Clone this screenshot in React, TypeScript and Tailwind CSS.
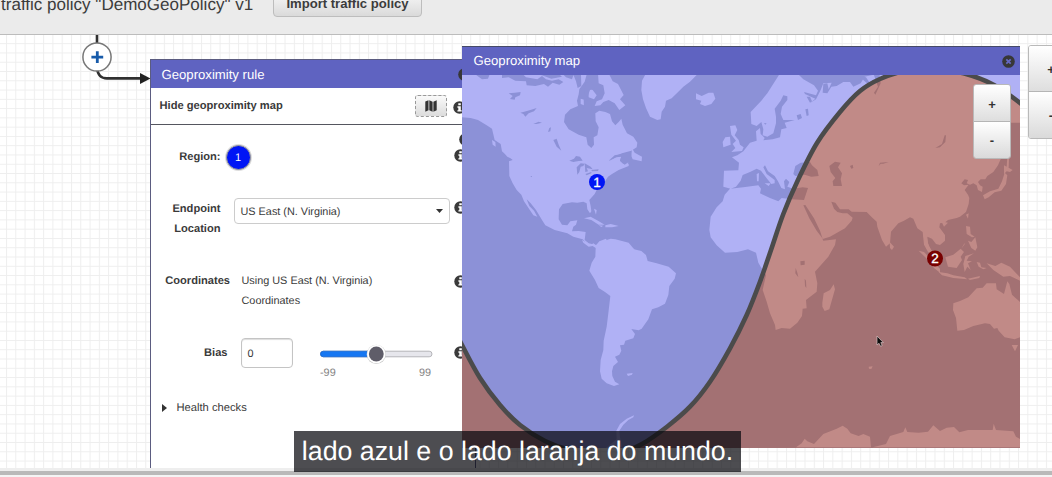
import React from "react";

type Point = [number, number];

const boundary: Point[] = [
  [452, 324], [462, 345], [480, 378], [500, 405], [520, 425], [545, 441], [570, 450], [600, 454], [622, 452],
  [642, 444], [667, 426.7], [690, 406.7], [710, 381.7], [730, 348.3], [746.7, 315], [760, 281.7], [771, 250],
  [783.3, 214], [797.5, 181], [817, 143], [840, 112], [860, 91], [880, 79], [905, 71], [934, 69], [966, 74],
  [994, 85], [1020, 103], [1036, 118],
];

function smooth(points: Point[]) {
  let d = `M${points[0][0]} ${points[0][1]}`;
  for (let i = 0; i < points.length - 1; i++) {
    const p0 = points[i - 1] ?? points[i];
    const p1 = points[i];
    const p2 = points[i + 1];
    const p3 = points[i + 2] ?? p2;
    d += ` C${p1[0] + (p2[0] - p0[0]) / 6} ${p1[1] + (p2[1] - p0[1]) / 6} ${p2[0] - (p3[0] - p1[0]) / 6} ${p2[1] - (p3[1] - p1[1]) / 6} ${p2[0]} ${p2[1]}`;
  }
  return d;
}

const boundaryPath = smooth(boundary);

function World({ land, water }: { land: string; water: string }) {
  return (
    <g>
      <rect x="462" y="75" width="558" height="373" fill={water} />
      {/* North and Central America, Greenland */}
      <g transform="translate(462 40) scale(.33333)">
        <g fill={land}>
          <path d="M0 100H375L368 125 352 148 350 163 345 182 348 198 325 208 309 224 306 246 320 268 350 284 373 292 377 314 388 324 396 314 395 292 406 286 410 262 401 244 400 220 412 212 430 216 444 222 450 244 460 256 470 246 478 236 482 254 495 280 514 290 526 308 524 322 508 332 480 340 462 347 440 364 462 352 478 348 474 362 484 372 500 371 500 378 470 390 450 402 438 410 424 432 404 450 398 462 382 480 386 498 388 514 384 520 376 508 374 490 364 485 346 488 330 487 302 492 291 508 290 538 300 554 316 556 325 544 346 541 342 554 334 560 330 574 350 573 371 576 368 600 380 610 402 615 416 612 428 612 434 622 420 628 404 618 380 616 362 598 334 590 316 580 278 570 250 556 240 540 222 510 206 490 194 478 202 498 216 512 226 530 214 526 202 508 186 484 178 464 164 450 152 430 142 408 141 364 152 360 134 344 120 334 116 312 98 300 90 266 74 256 48 240 26 234 0 232Z" />
          <path d="M120 332L142 340 152 358 136 350ZM90 300L100 306 101 320 92 314ZM510 324L518 338 540 350 539 364 512 358 508 348ZM484 370L500 362 496 376ZM552 100H709L684 125 664 140 649 155 629 175 612 182 609 200 599 215 596 238 586 240 564 230 552 204 543 178 538 150 540 122Z" />
          <path d="M408 100L440 100 452 124 468 132 485 165 474 178 490 196 472 210 458 190 440 180 424 186 415 196 398 198 404 184 420 178 428 160 424 136 410 130ZM380 146L392 150 404 166 396 178 380 172ZM356 176L370 180 386 196 372 198 356 192ZM366 535L386 530 408 542 428 554 410 554 388 540ZM430 556L446 552 470 558 450 562 430 562ZM396 506L404 510 402 524ZM410 556L424 557 418 561Z" />
          <path d="M434 600L446 596 460 598 500 608 520 632H430Z" />
        </g>
        <g fill={water}>
          <path d="M36 100H84L78 116 60 118ZM120 100H180L192 112 226 118 240 108 252 118 270 122 290 118 304 126 292 134 272 128 258 140 246 132 220 138 194 136 192 124 160 122 140 112 120 114ZM218 100H288L300 110 268 116 240 106ZM300 100H336L330 118 312 112ZM334 104H357L358 138 347 144 342 124ZM140 160L158 158 176 156 174 166 160 172 158 179 144 177 152 168ZM175 218L192 214 205 210 224 204 216 214 200 220 190 230 184 222ZM214 252L230 245 240 248 224 252ZM258 276L262 264 267 262 265 274ZM274 300L284 296 290 314 298 332 284 320ZM322 362L336 356 342 348 354 350 362 362 350 363 334 366ZM344 382L356 370 368 371 364 378 356 380 352 396 346 404ZM368 370L386 380 392 388 374 384 378 394 370 396ZM370 402L388 396 388 400 374 406ZM388 390L410 388 408 393 390 394ZM205 408L210 408 209 412ZM440 362L458 346 484 341 500 336 508 344 506 362 488 374 474 362 478 350 462 352ZM365 176L388 186 390 210 366 210ZM372 128L388 124 398 145 384 150 376 172 366 162Z" />
        </g>
      </g>
      {/* South America, Antarctic peninsula */}
      <g transform="translate(560 230) scale(.33333)" fill={land}>
        <path d="M66 30L78 36 92 46 100 40 108 46 118 34 138 26 142 34 152 28 158 34 190 36 206 44 222 58 244 63 258 75 263 93 290 100 326 110 348 130 344 146 328 168 325 195 315 221 295 232 276 238 265 268 245 296 236 301 214 297 225 312 220 325 196 332 192 344 180 346 184 362 178 374 165 380 174 396 160 408 156 424 157 438 165 455 178 463 162 468 140 460 125 446 120 424 122 390 130 360 131 332 140 290 145 250 151 198 135 186 116 174 105 150 88 122 95 98 106 80 107 54 98 48 86 50 70 38ZM200 431L218 429 216 434 204 438ZM222 556L220 562 205 570 190 584 178 602 180 622 186 650 130 660 170 628 169 602 180 582 200 566Z" />
      </g>
      {/* Eurasia and Africa */}
      <g transform="translate(650 40) scale(.33333)">
        <path
          fill={land}
          d="M390 100H1110V248H1083L1082 300 1070 340 1052 358 1044 376 1030 396 1012 408 1006 418 992 418 984 426 990 436 998 440 996 456 984 450 980 436 970 430 960 434 950 430 954 420 944 418 934 430 942 436 956 434 944 450 954 464 958 474 956 492 948 516 930 530 920 534 894 540 884 548 870 550 868 562 885 585 885 602 870 615 858 612 846 596 832 590 834 610 850 645 834 636 822 614 818 576 802 565 790 536 780 532 762 542 745 550 723 575 720 610 708 620 696 600 682 560 680 545 664 530 650 516 605 515 596 508 570 508 556 488 544 485 552 506 562 516 578 520 592 520 608 533 605 542 585 565 540 590 518 597 510 572 492 535 466 495 460 496 478 535 500 572 515 592 520 602 558 598 555 615 535 650 495 695 502 730 500 755 468 780 470 805 458 806 456 828 442 848 420 866 395 864 377 870 375 855 360 820 350 785 338 750 348 705 332 680 325 668 318 638 294 628 262 636 225 638 200 616 182 592 178 570 182 530 200 502 218 484 224 464 240 446 280 442 325 436 333 446 330 460 360 474 385 484 395 474 425 478 462 480 474 444 458 442 430 446 412 440 418 426 408 416 402 424 405 448 394 444 384 424 374 408 354 394 345 376 340 382 350 402 374 420 374 430 364 432 350 415 333 392 320 386 300 396 278 405 272 422 258 440 242 446 220 440 222 392 265 391 267 368 246 352 262 346 280 334 300 308 320 302 318 274 330 264 332 282 344 294 340 301 368 298 390 292 394 268 410 264 404 248 434 240 400 240 392 222 396 200 412 180 412 169 400 166 392 182 374 206 378 230 378 250 370 280 352 290 338 286 340 268 334 246 320 258 304 252 302 216 334 182 352 160Z"
        />
        <path
          fill={land}
          d="M240 258L256 256 262 270 254 286 266 300 270 314 281 322 276 333 244 336 256 324 248 312 258 302 244 284ZM226 292L240 290 242 314 220 322 218 306ZM138 160L155 168 176 158 190 158 196 176 184 192 165 198 150 192 154 182 138 178ZM344 430L362 430 356 438ZM320 402L327 399 326 424 321 424Z"
        />
        <g fill={water}>
          <path d="M442 100H690L644 110 632 130 610 140 600 126 580 126 560 138 544 140 532 160 518 158 520 132 532 130 536 148 545 128 520 130 512 150 498 178 482 188 496 176 465 162 462 156 498 166 504 152 492 136 460 118ZM632 108L648 112 660 130 656 134 640 120ZM670 100H688L692 130 676 164 672 158 684 140ZM470 170L480 170 486 184 480 188ZM440 226L452 222 456 234 444 240ZM466 208L474 206 476 226 470 228Z" />
          <path d="M430 402L436 378 452 368 480 366 486 376 502 390 506 408 484 410 464 404 436 408ZM538 378L555 365 572 368 564 382 576 400 572 418 576 438 550 438 548 424 556 414 542 396ZM600 378L608 374 610 384 604 386ZM686 378L690 368 716 366 700 371 692 371ZM856 324L876 312 884 286 888 286 886 306 870 322ZM451 664L464 662 464 674 452 676ZM437 684L442 698 445 712 436 700ZM464 716L468 722 469 744 465 738ZM342 249L350 250 346 254Z" />
        </g>
      </g>
      {/* Japan and the islands of south-east Asia */}
      <g transform="translate(780 120) scale(.33333)" fill={land}>
        <path d="M609 226L630 214 655 206 666 184 674 158 682 166 678 192 664 212 644 217 626 232 614 238ZM682 110L687 118 686 144 680 140ZM672 136L698 150 690 156 680 154 672 162ZM558 284L566 280 564 296ZM329 366L342 380 336 390 330 384ZM416 392L432 396 460 425 480 446 480 458 462 444 438 414ZM430 345L440 352 446 378 458 396 450 396 436 374ZM476 456L502 460 520 466 554 472 562 478 520 474 486 466ZM564 476L600 468 598 474 570 480ZM496 412L520 404 542 386 552 396 542 410 546 420 530 444 504 440ZM556 408L582 400 566 410 560 422 576 424 564 430 572 450 562 440 554 456 550 432ZM558 318L570 320 572 342 584 350 576 352 560 342ZM564 362L574 366 586 352 592 382 586 392 574 384ZM556 370L544 386 552 372ZM590 426L600 428 604 442 620 444 610 448 596 440ZM620 430L646 438 664 428 690 440 720 472 720 482 690 468 670 470 640 450ZM484 304L504 308 492 320Z" />
      </g>
      {/* Australia, Madagascar, Antarctica */}
      <g transform="translate(740 240) scale(.33333)" fill={land}>
        <path d="M640 190L660 183 685 172 710 145 728 143 740 130 768 130 770 148 792 162 802 124 808 132 816 164 840 186V292L824 298 794 292 776 272 772 264 762 266 750 252 735 250 700 258 672 270 652 272 648 234 639 210ZM815 315L834 315 825 334ZM247 188L251 160 270 150 281 133 285 148 268 208 254 213 247 200ZM386 380L398 379 394 387 387 386ZM168 622L185 610 194 596 202 604 222 612 250 582 290 566 308 557 322 566 332 580 356 588 370 582 390 590 393 622ZM398 622L438 612 450 588 490 576 496 562 502 576 536 578 564 575 580 556 600 573 620 563 642 561 658 577 684 570 758 570 761 551 768 570 820 574 828 590 842 598V622Z" />
      </g>
    </g>
  );
}

function MapDrawing() {
  const red = `${boundaryPath} L1036 460 L452 460 Z`;
  return (
    <svg className="block h-[373px] w-[558px]" viewBox="462 75 558 373">
      <defs>
        <clipPath id="eastZone">
          <path d={red} />
        </clipPath>
      </defs>
      <World land="#b0b1f5" water="#8c91d7" />
      <g clipPath="url(#eastZone)">
        <World land="#c18a87" water="#a37173" />
      </g>
      <path d={boundaryPath} fill="none" stroke="#4b4b4b" strokeWidth="4.6" />
      <g fontFamily="Liberation Sans, sans-serif" fontSize="13.5" fill="#fff" stroke="#fff" strokeWidth=".3" textAnchor="middle">
        <circle cx="597" cy="182" r="8" fill="#0015f5" stroke="none" />
        <text x="597" y="187">1</text>
        <circle cx="935" cy="258.5" r="8" fill="#780000" stroke="none" />
        <text x="935" y="263.3">2</text>
      </g>
      <path d="M877 336V345L879 343.3 880.6 346.3 882.2 345.5 880.8 342.6H883.4Z" fill="#0b0b0b" stroke="#d9c4c4" strokeWidth=".7" />
    </svg>
  );
}

function InfoIcon() {
  return (
    <svg className="block size-[13px] shrink-0" viewBox="0 0 13 13">
      <circle cx="6.5" cy="6.5" r="6.2" fill="#3a3a3a" />
      <path d="M5.3 2.3h2.5v2H5.3zM4.4 5.3h3.4v3.9h.9v1.4H4.4V9.2h.9V6.7h-.9z" fill="#fff" />
    </svg>
  );
}

function CloseIcon() {
  return (
    <svg className="block size-[13px] shrink-0" viewBox="0 0 13 13">
      <circle cx="6.5" cy="6.5" r="6.3" fill="#373737" />
      <path d="M4.3 4.3l4.4 4.4M8.7 4.3L4.3 8.7" stroke="#6669c4" strokeWidth="1.7" />
    </svg>
  );
}

function ZoomControl({ className, button }: { className: string; button: string }) {
  return (
    <div className={`flex flex-col overflow-hidden rounded-[3px] border border-[#b9b9b9] text-[13px] font-bold text-[#333] ${className}`}>
      <button className={`border-b border-[#b5b5b5] bg-linear-to-b from-white to-[#dedede] pt-[3px] ${button}`}>+</button>
      <button className={`bg-linear-to-b from-white to-[#dadada] pt-px ${button}`}>-</button>
    </div>
  );
}

function RulePanel() {
  return (
    <section className="absolute top-[59px] left-[150px] flex h-[409px] w-[326px] flex-col border-x border-t border-[#5b5c80] bg-white text-[10.87px] leading-5 text-[#3a3a3a]">
      <header className="flex h-7 shrink-0 items-center justify-between bg-[#5f63c1] pr-[4px] pl-[10.5px] text-[13.15px] text-white">
        <span className="pt-px">Geoproximity rule</span>
        <CloseIcon />
      </header>
      <div className="flex h-[37px] shrink-0 items-center border-b border-[#55565f] pl-[8.5px] text-[11.15px] font-bold">
        <span className="w-[255.5px]">Hide geoproximity map</span>
        <button className="flex h-[22px] w-8 items-center justify-center rounded-[3px] border border-dashed border-[#999] bg-linear-to-b from-[#fafafa] to-[#dcdcdc]">
          <svg className="h-3 w-3" viewBox="0 0 12 12" fill="#333">
            <path d="M.3 1.5L3.5.3v10L.3 11.7zM4.3.3l3.3 1.4v10L4.3 10.3zM8.4 1.7L11.7.3v10L8.4 11.7z" />
          </svg>
        </button>
        <span className="pt-0.5 pl-1.5"><InfoIcon /></span>
      </div>
      <div className="flex h-[66px] shrink-0 items-start">
        <span className="w-[69.5px] pt-[22px] text-right text-[11.1px] font-bold">Region:</span>
        <span className="mt-[20px] ml-[5px] flex size-[25px] items-center justify-center rounded-full border border-[#999] bg-[#0015f5] text-[11px] text-white ring-1 ring-[#ddd]">1</span>
        <div className="ml-auto flex flex-col gap-[3px] pt-[8px]">
          <span className="pl-[5px]"><CloseIcon /></span>
          <span className="pr-[8.5px]"><InfoIcon /></span>
        </div>
      </div>
      <div className="flex h-[71px] shrink-0 items-start pt-[7px]">
        <span className="w-[69.5px] pt-px text-right text-[11.1px] font-bold">Endpoint<br />Location</span>
        <div className="ml-[13.5px] flex h-[26px] w-[216px] items-center justify-between rounded-[4px] border border-[#ccc] pr-[6px] pl-[5.5px]">
          <span className="pt-px">US East (N. Virginia)</span>
          <svg className="h-1 w-[7px]" viewBox="0 0 7 4"><path d="M0 0H7L3.5 4Z" fill="#333" /></svg>
        </div>
        <span className="pt-[3px] pl-[4px]"><InfoIcon /></span>
      </div>
      <div className="flex h-[72px] shrink-0 items-start pt-[9px]">
        <span className="w-[79px] text-right text-[11.1px] font-bold">Coordinates</span>
        <span className="ml-[11.5px] w-[212.5px] whitespace-nowrap">Using US East (N. Virginia)<br />Coordinates</span>
        <span className="pt-[4px]"><InfoIcon /></span>
      </div>
      <div className="flex h-[63px] shrink-0 items-start">
        <span className="w-[76.5px] pt-[9px] text-right text-[11.1px] font-bold">Bias</span>
        <div className="ml-[13.5px] mt-[4px] flex h-[30px] w-[52px] items-center rounded-[4px] border border-[#c4c4c4] pt-0.5 pl-[5.5px] shadow-[inset_0_1px_1px_#ddd]">0</div>
        <div className="ml-[27px] w-[113px] pt-[9.5px]">
          <svg className="block h-5 w-[113px]" viewBox="0 0 113 20">
            <rect x=".5" y="7.2" width="111.5" height="5.6" rx="2.8" fill="#e6e6ec" stroke="#aeaeb2" strokeWidth=".9" />
            <rect x=".5" y="7.2" width="54" height="5.6" rx="2.8" fill="#1677f2" stroke="#0d62d2" strokeWidth=".7" />
            <circle cx="56.3" cy="10.4" r="9.6" fill="#ccc" />
            <circle cx="56.3" cy="10" r="9.2" fill="#fff" />
            <circle cx="56.3" cy="10" r="7.4" fill="#5f5d69" />
          </svg>
          <div className="flex justify-between pr-0.5 text-[#858585] -mt-[.5px]"><span>-99</span><span>99</span></div>
        </div>
        <span className="pt-[12px] pl-[21px]"><InfoIcon /></span>
      </div>
      <div className="flex items-center gap-[10px] pt-px pl-[10.5px]">
        <svg className="h-2 w-[5px]" viewBox="0 0 5 8"><path d="M0 0V8L5 4Z" fill="#333" /></svg>
        <span className="text-[11.2px]">Health checks</span>
      </div>
    </section>
  );
}

export default function App() {
  return (
    <div className="relative flex h-[477px] w-[1052px] flex-col overflow-hidden bg-white font-['Liberation_Sans',Arial,sans-serif] [text-rendering:geometricPrecision]">
      <header className="flex h-[35px] shrink-0 items-start border-b border-[#bcbcbc] bg-[#ebebeb] text-[#3c3c3c]">
        <h1 className="-mt-[6px] w-[273px] pl-px text-[17.05px] leading-[22px] whitespace-nowrap">traffic policy "DemoGeoPolicy" v1</h1>
        <button className="-mt-[10px] h-[27px] w-[149px] rounded-[4px] border border-[#bdbdbd] bg-linear-to-b from-[#fafafa] to-[#dadada] text-[13.1px] leading-[25px] font-bold">Import traffic policy</button>
      </header>
      <main className="h-[433px] shrink-0">
        <svg className="block h-[433px] w-[1052px]" viewBox="0 35 1052 433">
          <defs>
            <pattern id="grid" x="6" y="43.2" width="9.285" height="9.275" patternUnits="userSpaceOnUse">
              <path d="M.5 0V9.3M0 .5H9.3" stroke="#eeeeee" strokeWidth="1" />
            </pattern>
          </defs>
          <rect y="35" width="1052" height="433" fill="url(#grid)" />
          <path d="M97 35V68Q98 78.4 107 78.4H143" fill="none" stroke="#303030" strokeWidth="2.6" />
          <path d="M140 73V84L150.5 78.4Z" fill="#222" />
          <circle cx="97" cy="57" r="14.1" fill="#fff" stroke="#777" strokeWidth="1.5" />
          <path d="M97.3 51.3V63M91.4 57.1H103.2" stroke="#175baa" strokeWidth="2.8" />
        </svg>
      </main>
      <footer className="h-[9px] shrink-0 border-t-[3px] border-b-2 border-t-[#eeeeee] border-b-[#f4f4f4] bg-[#b9b9b9]" />
      <RulePanel />
      <section className="absolute top-[46px] left-[462px] w-[558px] border-t border-[#454a68]">
        <header className="flex h-7 items-center justify-between bg-[#5f63c1] pr-[5px] pl-[11.5px] text-[13.15px] text-white">
          <span>Geoproximity map</span>
          <CloseIcon />
        </header>
        <MapDrawing />
        <ZoomControl className="absolute top-[37px] right-[9px] w-[38px]" button="h-[36.5px]" />
      </section>
      <ZoomControl className="absolute top-[45px] left-[1028px] w-[46px]" button="h-[46px]" />
      <p className="absolute top-[431px] left-[294px] flex h-[41px] w-[447px] items-center justify-center bg-[#08080e]/72 text-[26.75px] whitespace-nowrap text-white">
        lado azul e o lado laranja do mundo.
      </p>
    </div>
  );
}
